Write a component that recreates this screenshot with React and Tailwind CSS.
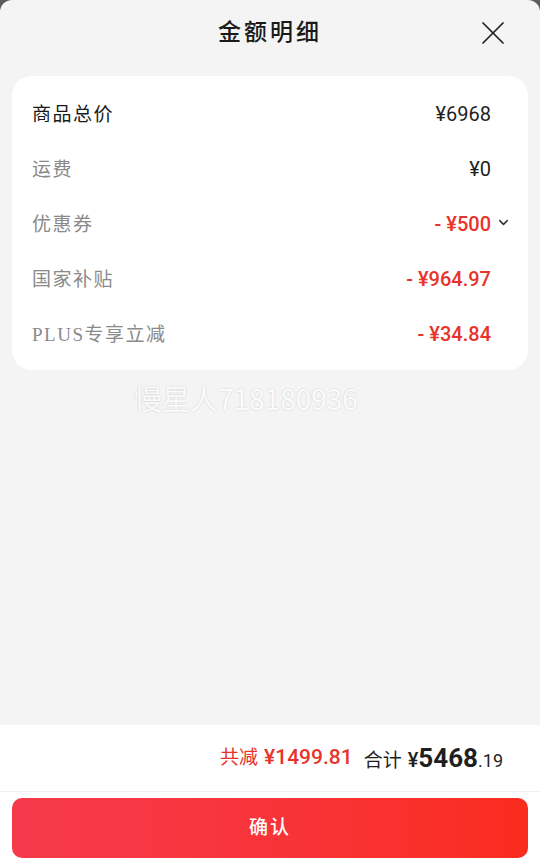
import { ChevronDown, X } from "lucide-react";

const rows = [
  { label: "商品总价", value: "¥6968", strong: true },
  { label: "运费", value: "¥0" },
  { label: "优惠券", value: "- ¥500", red: true, more: true },
  { label: "国家补贴", value: "- ¥964.97", red: true },
  { label: "PLUS专享立减", value: "- ¥34.84", red: true },
];

const cjk = "font-['Liberation_Serif','Noto_Sans_CJK_SC',serif]";
const num = "font-['Roboto','Noto_Sans_CJK_SC',sans-serif]";

export default function App() {
  return (
    <div className="relative h-[862px] w-[540px] overflow-hidden bg-[#5b5b5b]">
      <div className="flex h-full flex-col rounded-t-[12px] bg-[#f4f4f4]">
        {/* 标题 */}
        <div className="relative flex h-[66px] items-center justify-center">
          <h1 className={`${cjk} text-[23px] font-medium tracking-[3px] text-[#1a1a1a]`}>金额明细</h1>
          <button className="absolute right-[27px] top-[13px] text-[#222]">
            <X size={40} strokeWidth={1.05} />
          </button>
        </div>

        {/* 明细卡片 */}
        <div className="mx-3 mt-[10px] rounded-[20px] bg-white pb-[9px] pt-[10px]">
          {rows.map((r) => (
            <div key={r.label} className="flex h-[55px] items-center justify-between pl-5 pr-[37px]">
              <span
                className={`${cjk} mt-[3px] text-[19px] font-normal tracking-[1.5px] ${
                  r.strong ? "text-[#1a1a1a]" : "text-[#8a8a8a]"
                }`}
              >
                {r.label}
              </span>
              <span
                className={`${num} relative text-[20px] ${
                  r.red ? "font-medium text-[#e8332a]" : "font-normal text-[#1f1f1f]"
                }`}
              >
                {r.value}
                {r.more && (
                  <ChevronDown
                    size={15}
                    strokeWidth={2.4}
                    className="absolute left-full top-[6px] ml-[5px] text-[#333]"
                  />
                )}
              </span>
            </div>
          ))}
        </div>

        <div className="flex-1" />

        {/* 底部合计 */}
        <div className="bg-white">
          <div className="flex h-[66px] items-center justify-end gap-[11px] pr-[37px]">
            <span className="flex items-baseline text-[#e8332a]">
              <span className={`${cjk} mr-[6px] text-[19px]`}>共减</span>
              <span className={`${num} text-[21px] font-medium`}>¥1499.81</span>
            </span>
            <span className="flex items-baseline text-[#1f1f1f]">
              <span className={`${cjk} mr-[6px] text-[19px]`}>合计</span>
              <span className={`${num} text-[20px] font-medium`}>¥</span>
              <span className={`${num} text-[26px] font-bold`}>5468</span>
              <span className={`${num} text-[18px] font-normal`}>.19</span>
            </span>
          </div>
          <div className="h-px bg-[#efefef]" />
          <div className="px-3 pb-[4px] pt-[6px]">
            <button
              className={`${cjk} flex h-[60px] w-full items-center justify-center rounded-[10px] bg-gradient-to-r from-[#f63a4c] to-[#fa2c1d] text-[19px] font-medium tracking-[2px] text-white`}
            >
              确认
            </button>
          </div>
        </div>
      </div>

      {/* 水印 */}
      <div className="pointer-events-none absolute left-[134px] top-[377px] font-['Noto_Sans_CJK_SC',sans-serif] text-[28px] text-white/90 [text-shadow:0_0_2px_rgba(0,0,0,0.18)]">
        慢星人718180936
      </div>
    </div>
  );
}
